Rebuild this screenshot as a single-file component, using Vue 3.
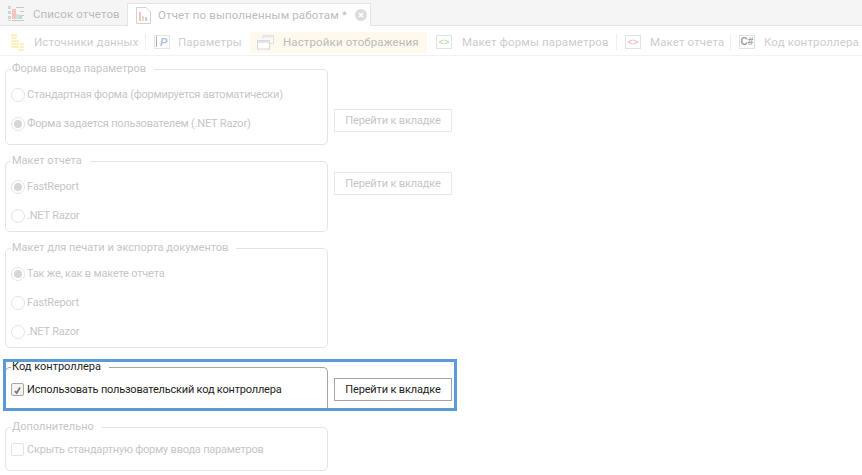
<script setup>
const tools = [
  { label: 'Источники данных', icon: 'src', sep: true },
  { label: 'Параметры', icon: 'par' },
  { label: 'Настройки отображения', icon: 'view', active: true },
  { label: 'Макет формы параметров', icon: 'form', sep: true },
  { label: 'Макет отчета', icon: 'rep', sep: true },
  { label: 'Код контроллера', icon: 'cs' },
]
const groups = [
  { title: 'Форма ввода параметров', size: 'h76', button: 'b40', rows: [
    { label: 'Стандартная форма (формируется автоматически)' },
    { label: 'Форма задается пользователем (.NET Razor)', on: true } ] },
  { title: 'Макет отчета', size: 'h71', button: 'b11', rows: [
    { label: 'FastReport', on: true },
    { label: '.NET Razor' } ] },
  { title: 'Макет для печати и экспорта документов', size: 'h100', rows: [
    { label: 'Так же, как в макете отчета', on: true },
    { label: 'FastReport' },
    { label: '.NET Razor' } ] },
]
</script>

<template>
  <div class="page">
    <div class="tabs">
      <div class="tab first">
        <svg width="17" height="16" viewBox="0 0 17 16" class="ico">
          <path d="M.5.500h2v2h-2zM.5 5.500h2v2h-2zM.5 10.500h2v2h-2zM.5 14.500h2" fill="none" stroke="#c8c8c8"/>
          <rect x="4" y="3" width="4" height="10" fill="#f7c4bd"/><rect x="8" y="8" width="3" height="5" fill="#d3e6cc"/><rect x="11" y="9" width="3" height="4" fill="#bfd3ea"/>
          <path d="M8 1.500h8M12 5.500h4M14 9.500h2M4 14.500h12" stroke="#c8c8c8"/>
        </svg>
        <span>Список отчетов</span>
      </div>
      <div class="tab current">
        <svg width="15" height="17" viewBox="0 0 15 17" class="ico">
          <path d="M.5.500h9.500l4.500 4.500v11.500H.5z" fill="#fff" stroke="#d2d2d2"/>
          <rect x="3" y="5" width="2" height="9" fill="#f7c4bd"/><rect x="6" y="9" width="2" height="5" fill="#d3e6cc"/><rect x="9" y="10" width="2" height="4" fill="#bfd3ea"/>
        </svg>
        <span class="tab-text">Отчет по выполненным работам *</span>
        <span class="close"><svg width="12" height="12" viewBox="0 0 12 12"><path d="M4 4l4 4m0-4l-4 4" stroke="#fff" stroke-width="1.600"/></svg></span>
      </div>
    </div>

    <div class="toolbar">
      <template v-for="t in tools" :key="t.label">
        <div class="tool" :class="[t.icon, { active: t.active }]">
          <svg v-if="t.icon === 'src'" width="13" height="17" viewBox="0 0 13 17">
            <path d="M0 0h6v2H0zM0 3h6v2H0zM0 6h8v2H0zM0 9h8v2H0zM0 12h8v2H0zM9 9h4v2H9zM9 12h4v2H9zM7 15h6v2H7z" fill="#feefbd"/>
          </svg>
          <svg v-else-if="t.icon === 'par'" width="16" height="15" viewBox="0 0 16 15">
            <rect x=".5" y=".5" width="15" height="13" fill="#fff" stroke="#e4e4e4"/><path d="M2.500 1v11" stroke="#b0b0b0"/><text x="6" y="11" class="pi">P</text>
          </svg>
          <svg v-else-if="t.icon === 'view'" width="17" height="15" viewBox="0 0 17 15">
            <path d="M6 3.500V.5h10.500v8H13" fill="none" stroke="#d6e0ee"/><path d="M6 .5h10.500v2H6z" fill="#e0e8f3"/>
            <rect x=".5" y="5.500" width="12" height="8.500" fill="#fff" stroke="#d4d8df"/><path d="M1 6h11v2H1z" fill="#e2e6ec"/>
          </svg>
          <span v-else class="box">{{ t.icon === 'cs' ? 'C#' : '<>' }}</span>
          <span class="tool-label">{{ t.label }}</span>
        </div>
        <i v-if="t.sep" class="sep"></i>
      </template>
    </div>

    <div class="content">
      <div v-for="g in groups" :key="g.title" class="row">
        <div class="group" :class="g.size">
          <div class="legend">{{ g.title }}</div>
          <label v-for="r in g.rows" :key="r.label" class="opt">
            <span class="radio" :class="{ on: r.on }"></span>{{ r.label }}
          </label>
        </div>
        <button v-if="g.button" class="go" :class="g.button">Перейти к вкладке</button>
      </div>

      <div class="row hot">
        <div class="group tight">
          <div class="legend">Код контроллера</div>
          <label class="opt">
            <span class="check"><svg width="13" height="13" viewBox="0 0 13 13"><path d="M3.500 7l2 2.500 4-6.500" fill="none" stroke="#777" stroke-width="2"/></svg></span>Использовать пользовательский код контроллера
          </label>
        </div>
        <button class="go b11">Перейти к вкладке</button>
        <div class="frame"></div>
      </div>

      <div class="row">
        <div class="group tight last">
          <div class="legend">Дополнительно</div>
          <label class="opt"><span class="check"></span>Скрыть стандартную форму ввода параметров</label>
        </div>
      </div>
    </div>
  </div>
</template>

<style scoped>
.page { width: 862px; height: 475px; overflow: hidden; background: #fff; color: #c6c6c6; font: 11px Roboto, "Liberation Sans", sans-serif; }
.tabs { height: 26px; box-sizing: border-box; background: #f5f5f5; border-bottom: 1px solid #e4e4e4; display: flex; align-items: flex-start; padding: 3px 0 0 8px; }
.tab { display: flex; align-items: center; height: 22px; color: #bcbcbc; white-space: nowrap; font-size: 11.5px; letter-spacing: .12px; }
.first { width: 119px; }
.first span { margin-left: 8px; }
.current { box-sizing: border-box; height: 23px; width: 244px; padding-left: 8px; background: #fff; border: 1px solid #e4e4e4; border-bottom: 0; }
.tab-text { margin-left: 7px; width: 197px; }
.close { width: 12px; height: 12px; border-radius: 50%; background: #dcdcdc; display: flex; }
.ico { flex: none; }
.toolbar { height: 30px; box-sizing: border-box; display: flex; align-items: center; padding: 3px 0 0 11px; border-bottom: 1px solid #f2f2f2; white-space: nowrap; font-size: 11.5px; letter-spacing: .13px; }
.tool { display: flex; align-items: center; height: 21px; flex: none; }
.tool-label { margin-left: 10px; color: #cdcdcd; }
.src .tool-label { width: 104px; }
.par .tool-label { margin-left: 8px; width: 63px; }
.active { background: #fef9ec; padding: 0 7px; margin: 0 9px; }
.active .tool-label { color: #bcbcbc; margin-left: 9px; width: 137px; }
.form .tool-label { width: 147px; }
.rep .tool-label { margin-left: 9px; width: 73px; }
.cs .tool-label { margin-left: 9px; }
.sep { flex: none; width: 1px; height: 16px; background: #eee; margin: 0 8px 0 7px; }
.box { box-sizing: border-box; width: 16px; height: 14px; border: 1px solid #e2e2e2; font: bold 9px/12px "Liberation Sans", sans-serif; letter-spacing: 0; text-align: center; }
.form .box { color: #bfe0b6; }
.rep .box { color: #f0bebe; }
.cs .box { color: #a0a0a0; font-size: 10px; }
.pi { font: italic bold 11px "Liberation Sans", sans-serif; fill: #aec2df; }
.content { padding: 13px 0 0 5px; }
.row { display: flex; position: relative; margin-bottom: 16px; }
.group { position: relative; box-sizing: border-box; width: 323px; border: 1px solid #e4e4e4; border-radius: 5px; padding: 10px 0 0 5px; }
.h76 { height: 76px; }
.h71 { height: 71px; }
.h100 { height: 100px; margin-bottom: 3px; }
.tight { padding-top: 7px; }
.legend { position: absolute; left: 5px; top: -9px; background: #fff; padding: 0 8px 0 1px; line-height: 16px; }
.opt { display: flex; align-items: center; height: 29px; white-space: nowrap; letter-spacing: -.2px; }
.radio { box-sizing: border-box; flex: none; width: 14px; height: 14px; margin-right: 2px; border: 1px solid #e4e4e4; border-radius: 50%; display: flex; align-items: center; justify-content: center; }
.radio.on::after { content: ""; width: 8px; height: 8px; border-radius: 50%; background: #d6d6d6; }
.check { box-sizing: border-box; flex: none; width: 13px; height: 13px; margin-right: 3px; border: 1px solid #e4e4e4; border-radius: 2px; display: flex; }
.go { box-sizing: border-box; width: 118px; height: 23px; margin-left: 6px; padding: 0; background: #fff; border: 1px solid #e8e8e8; color: #c6c6c6; font: inherit; letter-spacing: -.15px; }
.b40 { margin-top: 40px; }
.b11 { margin-top: 11px; }
.hot { color: #1e1e1e; height: 44px; }
.hot .group { height: 43px; border-color: #a6a6a6; border-bottom: 0; border-bottom-left-radius: 0; border-bottom-right-radius: 0; }
.hot .check { border-color: #a8a8a8; background: #f4f4f4; }
.hot .go { border-color: #a6a6a6; color: #1e1e1e; }
.frame { position: absolute; left: -2px; top: -8px; width: 454px; height: 52px; box-sizing: border-box; border: 3px solid #5b9bd5; pointer-events: none; }
.last { height: 44px; }
</style>
